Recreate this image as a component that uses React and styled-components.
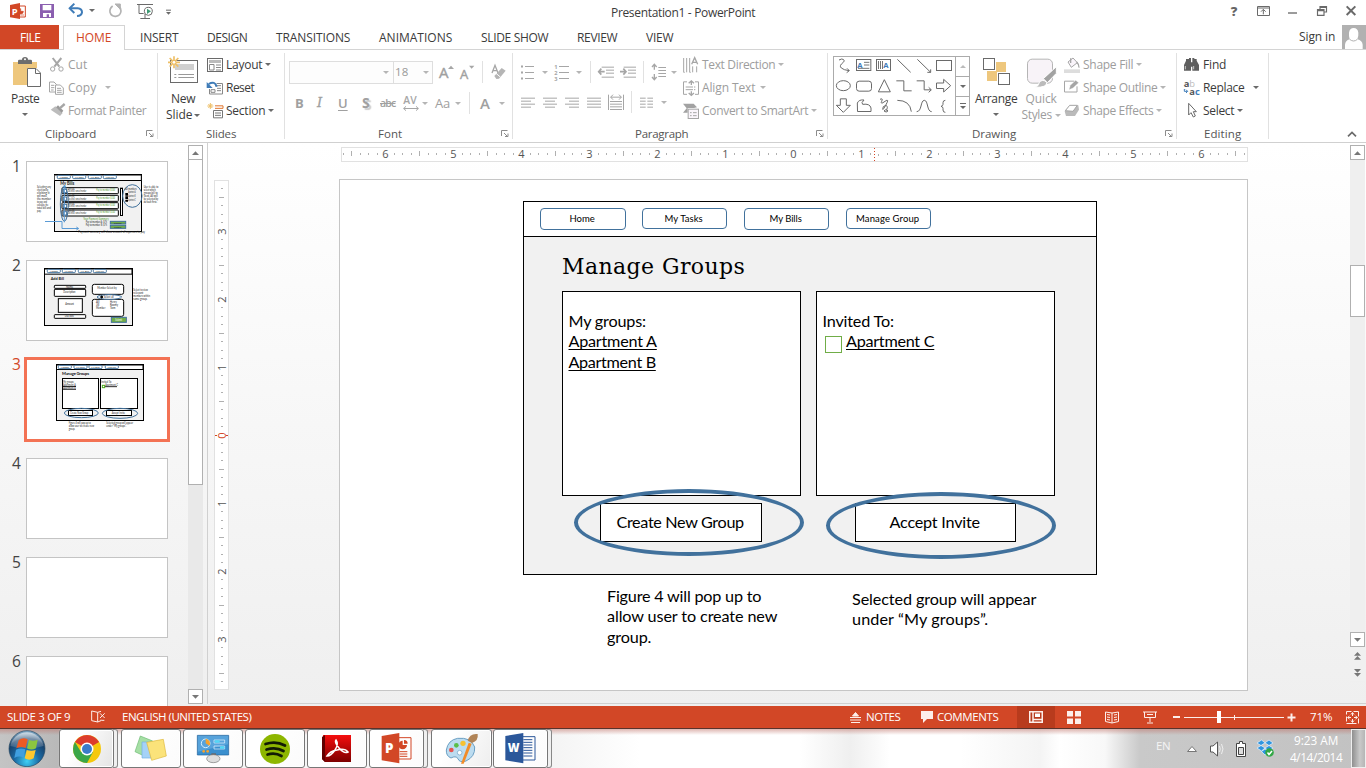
import React, { useLayoutEffect, useRef, useState } from "react";
import styled, { createGlobalStyle, css } from "styled-components";

const Global = createGlobalStyle`
  * { box-sizing: border-box; }
  body { margin: 0; width: 1366px; height: 768px; overflow: hidden; background: #fff; }
  svg { display: block; flex: none; }
`;

const ui = `"Open Sans", "Noto Sans", sans-serif`;
const slideFont = `Lato, "Open Sans", sans-serif`;
const G = "#6a6a6a";
const D = "#a6a6a6";
const BLUE = "#41719c";

/* ---------- text that is tracked to a given width ---------- */
const Tracked = styled.span`
  display: block;
  flex: none;
  width: ${(p) => p.$w}px;
  margin-left: ${(p) => p.$ml || 0}px;
  white-space: pre;
  font-family: ${(p) => p.$font || ui};
  font-size: ${(p) => p.$size || 12}px;
  color: ${(p) => p.$color || "#3b3b3b"};
  line-height: ${(p) => p.$lh || 16}px;
  ${(p) =>
    p.$underline &&
    css`
      text-decoration: underline;
      text-decoration-thickness: 1px;
      text-underline-offset: 2px;
      text-decoration-skip-ink: none;
    `}
`;

function Label({ w, size, color, font, lh, ml, underline, children }) {
  const ref = useRef(null);
  const [spacing, setSpacing] = useState(0);
  useLayoutEffect(() => {
    const natural = ref.current.getBoundingClientRect().width;
    const n = ref.current.textContent.length;
    setSpacing((w + 0.3 - natural) / n);
  }, []);
  return (
    <Tracked $w={w} $size={size} $color={color} $font={font} $lh={lh} $ml={ml} $underline={underline}>
      <span ref={ref} style={{ letterSpacing: spacing }}>{children}</span>
    </Tracked>
  );
}

/* Icon drawn on a grid of three units to the pixel */
const IconSvg = styled.svg`
  margin-left: ${(p) => p.$ml || 0}px;
  margin-top: ${(p) => p.$mt || 0}px;
  overflow: visible;
`;
const Icon = ({ x, y, w, h, ml, mt, children }) => (
  <IconSvg $ml={ml} $mt={mt} width={w} height={h} viewBox={`${x} ${y} ${w * 3} ${h * 3}`} fill="none" stroke={G} strokeWidth="3">
    {children}
  </IconSvg>
);

const Arrow = styled.i`
  flex: none;
  width: 0;
  height: 0;
  border: 3px solid transparent;
  border-top-color: ${(p) => (p.$dim ? "#b5b5b5" : "#6a6a6a")};
  border-bottom: 0;
  margin-left: ${(p) => p.$ml || 0}px;
  margin-top: ${(p) => p.$mt || 0}px;
`;

/* ---------- window frame ---------- */
const Window = styled.div`
  width: 1366px;
  height: 768px;
  display: flex;
  flex-direction: column;
  overflow: hidden;
  background: #fff;
  font-family: ${ui};
`;
const TitleBar = styled.div`
  height: 25px;
  flex: none;
  display: flex;
  align-items: flex-start;
  padding-left: 9px;
`;
const TitleSlot = styled.div`
  margin-left: 440px;
  padding-top: 5px;
`;
const TabBar = styled.div`
  height: 25px;
  flex: none;
  display: flex;
  border-bottom: 1px solid #d4d4d4;
`;
const Tab = styled.div`
  height: ${(p) => (p.$active ? 25 : 24)}px;
  width: ${(p) => p.$w}px;
  padding-left: ${(p) => p.$pad}px;
  padding-top: 5px;
  flex: none;
  ${(p) => p.$file && css`background: #d24726;`}
  ${(p) =>
    p.$active &&
    css`
      margin-left: 4px;
      border: 1px solid #d4d4d4;
      border-bottom: 0;
      background: #fff;
      padding-top: 4px;
    `}
`;
const SignIn = styled.div`
  margin-left: auto;
  display: flex;
  gap: 7px;
  padding-top: 4px;
`;
const Avatar = styled.div`
  width: 24px;
  height: 24px;
  margin-top: -4px;
  background: #b1b1b1;
`;

/* ---------- ribbon ---------- */
const Ribbon = styled.div`
  height: 93px;
  flex: none;
  display: flex;
  border-bottom: 1px solid #d0d0d0;
`;
const GroupBox = styled.div`
  width: ${(p) => p.$w}px;
  height: 92px;
  flex: none;
  display: flex;
  flex-direction: column;
  border-right: 1px solid #e1e1e1;
  border-image: linear-gradient(#fff 4px, #e1e1e1 4px, #e1e1e1 88px, #fff 88px) 1;
`;
const GroupBody = styled.div`
  height: 76px;
  display: flex;
  padding-top: 4px;
`;
const Caption = styled.div`
  height: 16px;
  display: flex;
  align-items: center;
  padding-left: ${(p) => p.$pad}px;
`;
const Launch = styled.div`
  margin-left: auto;
  padding-right: 3px;
`;
const Big = styled.div`
  width: ${(p) => p.$w}px;
  margin-left: ${(p) => p.$ml || 0}px;
  flex: none;
  display: flex;
  flex-direction: column;
  align-items: center;
`;
const BigIcon = styled.div`
  height: 37px;
  display: flex;
  align-items: flex-start;
`;
const Line = styled.div`
  height: 16px;
  display: flex;
  align-items: center;
  justify-content: center;
`;
const Rows = styled.div`
  display: flex;
  flex-direction: column;
  margin-top: -1px;
  margin-left: ${(p) => p.$ml || 0}px;
`;
const Row = styled.div`
  height: 23px;
  display: flex;
  align-items: center;
`;
const IconSlot = styled.div`
  width: ${(p) => p.$w || 18}px;
  flex: none;
`;
const Tools = styled.div`
  height: 22px;
  display: flex;
  align-items: center;
  margin-top: ${(p) => p.$mt}px;
  padding-left: ${(p) => p.$pl || 0}px;
`;
const Combo = styled.div`
  width: ${(p) => p.$w}px;
  margin-left: ${(p) => p.$ml || 0}px;
  height: 23px;
  flex: none;
  border: 1px solid #dedede;
  background: #fdfdfd;
  display: flex;
  align-items: center;
  padding-left: 1px;
`;
const Sep = styled.div`
  width: 1px;
  height: 22px;
  flex: none;
  background: #e1e1e1;
  margin-left: ${(p) => p.$ml}px;
`;
const Glyph = styled.span`
  width: ${(p) => p.$w}px;
  margin-left: ${(p) => p.$ml || 0}px;
  flex: none;
  white-space: nowrap;
  font-size: ${(p) => p.$size || 13}px;
  line-height: 20px;
  color: #a0a0a0;
  ${(p) => p.$css}
`;

const Launcher = () => (
  <Icon x={438} y={393} w={8} h={8}>
    <path d="M439.5 411V394.500H457.500M447 402l10 10M459 403.500V412.500H450" stroke="#8c8c8c" />
  </Icon>
);

function Group({ w, caption, cw, pad, launcher, children }) {
  return (
    <GroupBox $w={w}>
      <GroupBody>{children}</GroupBody>
      <Caption $pad={pad}>
        <Label w={cw} size={11.5} color="#555">{caption}</Label>
        {launcher && <Launch><Launcher /></Launch>}
      </Caption>
    </GroupBox>
  );
}

function Small({ icon, slot, label, w, dim, caret, gap = 3 }) {
  return (
    <Row>
      <IconSlot $w={slot}>{icon}</IconSlot>
      <Label w={w} color={dim ? "#9d9d9d" : "#3b3b3b"}>{label}</Label>
      {caret && <Arrow $dim={dim} $ml={gap} />}
    </Row>
  );
}

function ClipboardGroup() {
  return (
    <Group w={158} caption="Clipboard" cw={51} pad={45} launcher>
      <Big $w={50}>
        <BigIcon>
          <Icon x={36} y={174} w={31} h={32} ml={4} mt={3}>
            <path d="M39 189H111V207H81V258H39Z" fill="#eec77d" stroke="none" />
            <path d="M54 195v-9q0-4 4-4h8q0-8 9-8t9 8h8q4 0 4 4v9Z" fill="#6d6d6d" stroke="none" />
            <circle cx="75" cy="181" r="3" fill="#fff" stroke="none" />
            <path d="M82.500 208.500H108L121.500 222V262.500H82.500ZM106.500 208.500V223.500H121.500" fill="#fff" />
          </Icon>
        </BigIcon>
        <Line><Label w={28}>Paste</Label></Line>
        <Line><Arrow $mt={-2} /></Line>
      </Big>
      <Rows>
        <Small dim label="Cut" w={19} icon={
          <Icon x={150} y={168} w={15} h={16}>
            <path d="M158 171L178 197M184 171L163 197" stroke={D} strokeWidth="6" />
            <circle cx="158" cy="204" r="6.500" stroke={D} /><circle cx="183" cy="204" r="6.500" stroke={D} />
          </Icon>} />
        <Small dim label="Copy" w={28} caret gap={9} icon={
          <Icon x={147} y={240} w={16} h={14} ml={-1}>
            <path d="M148.500 243H162l8 8V273H148.500ZM153 253h10M153 260h10M153 267h8" stroke={D} />
            <path d="M166.500 252H181l9 9V280H166.500ZM171 262h12M171 268h14M171 274h14" fill="#fff" stroke={D} />
          </Icon>} />
        <Small dim label="Format Painter" w={78} icon={
          <Icon x={148} y={308} w={16} h={15}>
            <path d="M150 328L164 318L186 338L178 347Z" fill="#bcbcbc" stroke="none" />
            <path d="M166 321l6-6 16 16-5 6Z" fill="#999" stroke="none" />
            <path d="M177 324L192 311" stroke={D} strokeWidth="7" />
          </Icon>} />
      </Rows>
    </Group>
  );
}

function SlidesGroup() {
  return (
    <Group w={127} caption="Slides" cw={30} pad={48}>
      <Big $w={48} $ml={1}>
        <BigIcon>
          <Icon x={501} y={168} w={31} h={28} ml={0} mt={2}>
            <rect x="508.500" y="181.500" width="81" height="66" fill="#fff" />
            <path d="M522 192H579V210H522Z" fill="#d0d0d0" stroke="none" />
            <path d="M520 223.500H526M532 223.500H579M520 232.500H526M532 232.500H579" stroke="#999" />
            <path d="M519 169V205M501 187H537M506 174l26 26M532 174l-26 26" stroke="#eebf66" strokeWidth="5" />
            <circle cx="519" cy="187" r="4" fill="#fff" stroke="none" />
          </Icon>
        </BigIcon>
        <Line><Label w={24}>New</Label></Line>
        <Line><Label w={26}>Slide</Label><Arrow $ml={2} /></Line>
      </Big>
      <Rows>
        <Small slot={19} label="Layout" w={36} caret icon={
          <Icon x={621} y={171} w={16} h={14}>
            <rect x="622.500" y="172.500" width="45" height="39" />
            <path d="M627 177H663V186H627Z" fill="#bbb" stroke="none" /><path d="M628.500 190.500H642V207H628.500ZM648 192H663M648 199.500H663M648 207H663" stroke="#888" />
          </Icon>} />
        <Small slot={19} label="Reset" w={28} icon={
          <Icon x={621} y={240} w={16} h={14}>
            <path d="M650 247.500H667.500V279H628.500V264M645 254H663M633 266H645V274H633ZM651 262H663M651 269H663" stroke="#888" />
            <path d="M626 249Q645 238 650 257" stroke="#3f7cb8" strokeWidth="6" /><path d="M620 243V261H638Z" fill="#3f7cb8" stroke="none" />
          </Icon>} />
        <Small slot={19} label="Section" w={39} caret icon={
          <Icon x={621} y={308} w={16} h={16}>
            <path d="M631 308v18M622 317h18M625 311l12 12M637 311l-12 12" stroke="#eebf66" />
            <path d="M645 316.500H669V324H645" stroke="#e0752e" />
            <path d="M640.500 330.500H667.500V352.500H640.500ZM645 338h18M645 345h18" stroke="#777" />
          </Icon>} />
      </Rows>
    </Group>
  );
}

function FontGroup() {
  return (
    <Group w={228} caption="Font" cw={24} pad={93} launcher>
      <Rows>
        <Tools $mt={8} $pl={4}>
          <Combo $w={105}><Arrow $dim $ml={92} /></Combo>
          <Combo $w={40} $ml={-1}><Label w={13} color="#999" size={11.500}>18</Label><Arrow $dim $ml={15} /></Combo>
          <Glyph $w={13} $ml={6} $size={15} $css="-webkit-text-stroke:.4px #a0a0a0">A</Glyph>
          <Icon x={0} y={0} w={6} h={4} ml={-4} mt={-11}><path d="M0 12L9 2L18 12Z" fill={D} stroke="none" /></Icon>
          <Glyph $w={10} $ml={6} $size={13} $css="-webkit-text-stroke:.4px #a0a0a0;padding-top:3px">A</Glyph>
          <Icon x={0} y={0} w={5} h={4} ml={-1} mt={-11}><path d="M0 2L8 11L16 2Z" fill={D} stroke="none" /></Icon>
          <Sep $ml={8} />
          <Icon x={630} y={48} w={16} h={16} ml={8}>
            <path d="M633 75L642 52L651 75M637 68H648" stroke={D} strokeWidth="4" />
            <path d="M640 84L662 60L674 68L654 92L646 93Z" fill="#b5b5b5" stroke="none" /><path d="M645 76l13 11" stroke="#fff" />
          </Icon>
        </Tools>
        <Tools $mt={9} $pl={10}>
          <Glyph $w={8} $css="font-weight:700">B</Glyph>
          <Glyph $w={8} $ml={14} $css="font-family:'DejaVu Serif',serif;font-style:italic;-webkit-text-stroke:.3px #a0a0a0">I</Glyph>
          <Glyph $w={10} $ml={13} $css="font-weight:600;text-decoration:underline;text-underline-offset:2px">U</Glyph>
          <Glyph $w={10} $ml={14} $size={14} $css="font-weight:700;text-shadow:2px 2px 1px #ccc">S</Glyph>
          <Glyph $w={16} $ml={8} $size={10.500} $css="text-decoration:line-through;letter-spacing:-.8px;font-weight:600">abc</Glyph>
          <Icon x={366} y={142} w={16} h={15} ml={7}>
            <text x="367" y="166" fontSize="31" fontFamily="Open Sans" fontWeight="600" fill={D} stroke="none">AV</text>
            <path d="M368 179.500H412M375 173l-7 6.500 7 6.500M405 173l7 6.500-7 6.500" stroke={D} />
          </Icon>
          <Arrow $dim $ml={3} />
          <Glyph $w={17} $ml={7} $size={13} $css="letter-spacing:-.3px">Aa</Glyph>
          <Arrow $dim $ml={3} />
          <Sep $ml={8} />
          <Glyph $w={10} $ml={10} $size={15} $css="font-weight:600">A</Glyph>
          <Arrow $dim $ml={9} />
        </Tools>
      </Rows>
    </Group>
  );
}

function ParagraphGroup() {
  return (
    <Group w={315} caption="Paragraph" cw={53} pad={122} launcher>
      <Rows>
        <Tools $mt={8} $pl={8}>
          <Icon x={48} y={45} w={14} h={17}>
            <path d="M60 52.500H87M60 70.500H87M60 88.500H87" stroke={D} /><path d="M48 52.500h6M48 70.500h6M48 88.500h6" stroke={D} strokeWidth="6" />
          </Icon>
          <Arrow $dim $ml={7} />
          <Icon x={147} y={45} w={15} h={17} ml={6}>
            <path d="M162 52.500H192M162 70.500H192M162 88.500H192" stroke={D} />
            <g fontFamily="Open Sans" fontSize="17" fontWeight="700" fill={D} stroke="none"><text x="148" y="59">1</text><text x="148" y="77">2</text><text x="148" y="95">3</text></g>
          </Icon>
          <Arrow $dim $ml={7} />
          <Sep $ml={8} />
          <Icon x={276} y={55} w={16} h={12} ml={7}>
            <path d="M287 58.500H324M300 67.500H324M300 76.500H324M287 88.500H324" stroke={D} /><path d="M278 72H296M286 63l-8 9 8 9" stroke={D} strokeWidth="5" />
          </Icon>
          <Icon x={342} y={55} w={16} h={12} ml={6}>
            <path d="M353 58.500H390M366 67.500H390M366 76.500H390M353 88.500H390" stroke={D} /><path d="M342 72H360M352 63l8 9-8 9" stroke={D} strokeWidth="5" />
          </Icon>
          <Sep $ml={7} />
          <Icon x={438} y={48} w={15} h={16} ml={8}>
            <path d="M457 58.500H480M457 67.500H480M457 76.500H480M457 85.500H480" stroke={D} /><path d="M445 49V65M438 57l7-8 7 8M445 78V95M438 87l7 8 7-8" stroke={D} strokeWidth="4" />
          </Icon>
          <Arrow $dim $ml={4} />
        </Tools>
        <Tools $mt={8} $pl={8}>
          {[["M48 151.500H90M48 160.500H78M48 169.500H90M48 178.500H78", 0, 48], ["M114 151.500H156M120 160.500H150M114 169.500H156M120 178.500H150", 8, 114], ["M180 151.500H222M192 160.500H222M180 169.500H222M192 178.500H222", 8, 180], ["M246 151.500H288M246 160.500H288M246 169.500H288M246 178.500H288", 8, 246]].map(([d, ml, x]) => (
            <Icon key={x} x={x} y={148} w={14} h={11} ml={ml}><path d={d} stroke={D} /></Icon>
          ))}
          <Icon x={309} y={139} w={16} h={16} ml={7}>
            <path d="M310.500 141V187M355.500 141V187M315 161.500H351M315 169.500H351M315 177.500H351M315 185.500H351M317 148.500H349M324 141l-7 7.500 7 7.500M342 141l7 7.500-7 7.500" stroke={D} />
          </Icon>
          <Sep $ml={7} />
          <Icon x={405} y={148} w={13} h={11} ml={8}><path d="M405 151.500H422M405 160.500H422M405 169.500H422M405 178.500H422M427 151.500H444M427 160.500H444M427 169.500H444M427 178.500H444" stroke={D} /></Icon>
          <Arrow $dim $ml={8} />
        </Tools>
      </Rows>
      <Rows $ml={6}>
        <Small slot={19} dim label="Text Direction" w={73} caret icon={
          <Icon x={534} y={24} w={16} h={16}>
            <path d="M536 27V70M545 27V70M554 27V70M563 52V70M575 52V70M536 70h3M554 70h3" stroke={D} /><path d="M560 46L569 26L578 46M564 40H575" stroke={D} strokeWidth="4" />
          </Icon>} />
        <Small slot={19} dim label="Align Text" w={53} caret gap={5} icon={
          <Icon x={534} y={92} w={16} h={16}>
            <path d="M546 97.500H535.500V135H546M570 97.500H580.500V135H570" stroke={D} /><path d="M542 113H574M542 121H574" stroke={D} strokeDasharray="22 3 4 3" />
            <path d="M559 95V107M559 126V138M551 102l8-7 8 7M551 131l8 7 8-7" stroke={D} strokeWidth="4" />
          </Icon>} />
        <Small slot={19} dim label="Convert to SmartArt" w={106} caret icon={
          <Icon x={534} y={161} w={16} h={16}>
            <path d="M534 163H566L576 174L567 176H548V190H534L545 177Z" fill="#a2a2a2" stroke="none" /><rect x="549.500" y="179.500" width="31" height="28" fill="#faf5fb" stroke={D} /><path d="M555 190h5M564 190h11M555 199h5M564 199h11" stroke={D} />
          </Icon>} />
      </Rows>
    </Group>
  );
}

const Gallery = styled.div`
  width: 137px;
  height: 60px;
  margin: 2px 0 0 5px;
  flex: none;
  display: flex;
  border: 1px solid #ababab;
`;
const ShapeGrid = styled.div`
  width: 121px;
  height: 58px;
  padding-left: 1px;
  overflow: hidden;
  display: grid;
  grid-template-columns: repeat(6, 20px);
  grid-auto-rows: 20px;
`;
const GalleryBtns = styled.div`
  flex: 1;
  display: grid;
  grid-template-rows: 20px 20px 1fr;
  border-left: 1px solid #ababab;
`;
const GalleryBtn = styled.div`
  display: flex;
  flex-direction: column;
  gap: 2px;
  align-items: center;
  justify-content: center;
  border-bottom: ${(p) => (p.$last ? 0 : "1px solid #ababab")};
`;
const Bar = styled.i`
  width: 6px;
  height: 1px;
  background: #6a6a6a;
`;
const TA = (x, y) => <text x={x} y={y} fontSize="23" fontWeight="700" fontFamily="Open Sans" fill="#3f7cb8" stroke="none">A</text>;
const shapes = [
  <path d="M42 36L50 33Q62 35 55 43Q41 53 49 60Q56 66 72 68M66 61l7 7-8 6" />,
  <g><rect x="94.500" y="34.500" width="43" height="33" />{TA(97, 59)}<path d="M117 43H133M117 51H133M99 61H133" stroke="#777" /></g>,
  <g><rect x="154.500" y="34.500" width="42" height="33" />{TA(175, 59)}<path d="M160.500 39V63M166.500 39V63M172.500 39V63" stroke="#777" /></g>,
  <path d="M217 34L257 73" />,
  <path d="M277 34L317 73M317 64v9h-10" />,
  <rect x="334.500" y="37.500" width="45" height="30" />,
  <ellipse cx="55" cy="113" rx="21" ry="15" />,
  <rect x="94.500" y="99.500" width="45" height="30" rx="8" />,
  <path d="M178 95L160 131.500H196Z" />,
  <path d="M214 98.500H236.500V128.500H260" />,
  <path d="M275 98.500H297.500V125.500H318M311 118l8 7.500-8 7.500" />,
  <path d="M334.500 105H356V94L377 113L356 132V121.500H334.500Z" />,
  <path d="M46 152.500H64V172H76L55 193L34 172H46Z" />,
  <path d="M97 165q5-11 20-9q-10 9-4 13q22-3 25 11v10.500H97.500Z" />,
  <path d="M165 154q10-5 5 6t10 0t2 12t-7 4q12-8 12 3q-5 8 2 10q-5 6-12 0q3-6 10-2" />,
  <path d="M217 157Q255 157 259 191" />,
  <path d="M275 191C291 191 286 157 298 157S305 191 320 191" />,
  <path d="M361 157q-7 0-7 7v5q0 5-6 6q6 1 6 6v5q0 7 7 7" />,
];

function DrawingGroup() {
  return (
    <Group w={349} caption="Drawing" cw={44} pad={144} launcher>
      <Gallery>
        <ShapeGrid>
          {shapes.map((s, i) => (
            <Icon key={i} x={30 + 60 * (i % 6)} y={27 + 60 * Math.floor(i / 6)} w={20} h={20}>{s}</Icon>
          ))}
        </ShapeGrid>
        <GalleryBtns>
          <GalleryBtn><Icon x={0} y={0} w={6} h={3}><path d="M0 9L9 0L18 9Z" fill="#bbb" stroke="none" /></Icon></GalleryBtn>
          <GalleryBtn><Arrow /></GalleryBtn>
          <GalleryBtn $last><Bar /><Arrow /></GalleryBtn>
        </GalleryBtns>
      </Gallery>
      <Big $w={50} $ml={1}>
        <BigIcon>
          <Icon x={471} y={27} w={27} h={28} mt={3}>
            <path d="M510 42H540V72H510ZM483 69H513V99H483Z" fill="#eec77d" stroke="none" /><rect x="472.500" y="31.500" width="33" height="33" fill="#fff" /><rect x="517.500" y="76.500" width="33" height="33" fill="#fff" />
          </Icon>
        </BigIcon>
        <Line><Label w={42}>Arrange</Label></Line>
        <Line><Arrow $mt={-2} /></Line>
      </Big>
      <Big $w={44} $ml={-2}>
        <BigIcon>
          <Icon x={609} y={30} w={30} h={30} mt={4} ml={2}>
            <rect x="610.500" y="33.500" width="75" height="72" rx="14" fill="#f8f3f8" stroke="#b5b5b5" /><path d="M697 56V76L670 104L658 92Z" fill="#a2a2a2" stroke="#fff" /><path d="M631 118Q645 115 645 104Q656 91 668 103Q671 119 631 118Z" fill="#bbb" stroke="#fff" />
          </Icon>
        </BigIcon>
        <Line><Label w={31} color="#9d9d9d">Quick</Label></Line>
        <Line><Label w={30} color="#9d9d9d">Styles</Label><Arrow $dim $ml={3} /></Line>
      </Big>
      <Rows $ml={1}>
        <Small slot={19} dim label="Shape Fill" w={50} caret icon={
          <Icon x={723} y={24} w={16} h={16}><path d="M735 39L750 27L763 41L745 55Z" fill="#faf5fb" stroke={D} /><path d="M743 28v14M761 39q8 8 7 17" stroke={D} strokeWidth="4" /><path d="M723 61H771V72H723Z" fill="#ddd" stroke="none" /></Icon>} />
        <Small slot={19} dim label="Shape Outline" w={74} caret icon={
          <Icon x={723} y={93} w={16} h={15}><path d="M754 96.500H724.500V129H762V112" stroke={D} /><path d="M738 122L742 109L758 94L767 101L750 117Z" fill="#a5a5a5" stroke="#fff" strokeWidth="1" /></Icon>} />
        <Small slot={19} dim label="Shape Effects" w={70} caret icon={
          <Icon x={723} y={168} w={16} h={14}><path d="M725 190L740 172H766L768 185L756 204H729Z" fill="#bababa" stroke="none" /><path d="M727 188L740 172H763L750 190Z" fill="#fff" stroke={D} /></Icon>} />
      </Rows>
    </Group>
  );
}

function EditingGroup() {
  return (
    <Group w={92} caption="Editing" cw={37} pad={27}>
      <Rows $ml={7}>
        <Small slot={19} label="Find" w={23} icon={
          <Icon x={282} y={171} w={16} h={14}><path d="M282 192L288 179V174H297V171H303V192V209H282ZM307 171H313V174H320V179L327 192V209H307ZM301 184H309V197H301Z" fill="#5f5f5f" stroke="none" /><path d="M286 195v10M311 195v10" stroke="#fff" strokeWidth="2" /></Icon>} />
        <Small slot={19} label="Replace" w={41} caret gap={9} icon={
          <Icon x={282} y={238} w={16} h={16}>
            <text fontFamily="Open Sans" fontSize="28" fontWeight="700" stroke="none"><tspan x="281" y="259" fill="#555">a</tspan><tspan fill="#bbb" fontWeight="400">b</tspan><tspan x="298" y="282" fill="#555">a</tspan><tspan fill="#3f7cb8">c</tspan></text>
            <path d="M283 265V272H292M288 267l5 5-5 5" stroke="#3f7cb8" />
          </Icon>} />
        <Small slot={19} label="Select" w={31} caret icon={
          <Icon x={288} y={308} w={14} h={15} ml={2}><path d="M296 309V344L303 337L310 350L316 347L310 334H319Z" fill="#fff" /></Icon>} />
      </Rows>
    </Group>
  );
}

const Collapse = styled.div`
  margin-left: auto;
  align-self: flex-end;
  padding: 0 9px 5px 0;
`;

/* ---------- work area ---------- */
const Work = styled.div`
  height: 563px;
  flex: none;
  display: flex;
  background: linear-gradient(#fff, #efefef);
`;
const ThumbPane = styled.div`
  width: 188px;
  flex: none;
  padding: 16px 0 0 12px;
  overflow: hidden;
`;
const ThumbRow = styled.div`
  height: 99px;
  display: flex;
  align-items: flex-start;
`;
const Num = styled.span`
  width: 12px;
  margin-top: -3px;
  flex: none;
  font-size: 15.5px;
  letter-spacing: -0.5px;
  line-height: 20px;
  color: ${(p) => (p.$on ? "#d24726" : "#444")};
`;
const Thumb = styled.div`
  box-sizing: content-box;
  width: 142px;
  height: 81px;
  margin: ${(p) => (p.$on ? -2 : 2)}px 0 0 ${(p) => (p.$on ? 0 : 2)}px;
  ${(p) => p.$on && css`margin-top: 0;`}
  outline: ${(p) => (p.$on ? "1px solid #f37254" : 0)};
  outline-offset: -3px;
  border: ${(p) => (p.$on ? "2px solid #f37254" : 0)};
  box-shadow: ${(p) => (p.$on ? "none" : "inset 0 0 0 1px #c4c4c4")};
  background: #fff;
`;
const ScrollBar = styled.div`
  width: 15px;
  height: ${(p) => p.$h}px;
  margin-top: 2px;
  flex: none;
  display: flex;
  flex-direction: column;
  background: ${(p) => p.$bg || "#e9e9e9"};
`;
const ScrollCell = styled.div`
  height: ${(p) => p.$h}px;
  margin-top: ${(p) => p.$mt || 0}px;
  flex: none;
  display: flex;
  align-items: center;
  justify-content: center;
  background: #fff;
  border: 1px solid #b0b0b0;
`;
const JumpCell = styled.div`
  height: 17px;
  display: flex;
  align-items: center;
  justify-content: center;
  background: #f0f0f0;
`;
const Splitter = styled.div`
  width: 1px;
  height: 561px;
  margin-left: 4px;
  background: #d0d0d0;
`;
const Editor = styled.div`
  flex: 1;
  height: 561px;
  display: flex;
  border-bottom: 1px solid #d0d0d0;
  margin-left: 2px;
`;
const VRuler = styled.div`
  width: 15px;
  height: 510px;
  margin: 37px 0 0 4px;
  flex: none;
  background: #fff;
  border: 1px solid #e1e1e1;
  overflow: hidden;
  display: flex;
  flex-direction: column;
  justify-content: center;
`;
const HRuler = styled.div`
  width: 907px;
  height: 15px;
  margin: 4px 0 0 112px;
  background: #fff;
  border: 1px solid #e1e1e1;
  padding: 0 2px 2px 0;
  overflow: hidden;
  display: flex;
  justify-content: center;
`;
const Tick = styled.div`
  ${(p) => (p.$v ? "height" : "width")}: 8.5px;
  flex: none;
  display: flex;
  align-items: center;
  justify-content: center;
  font-size: 11px;
  line-height: 13px;
  color: #555;
  ${(p) =>
    p.$mark &&
    (p.$v
      ? css`
          color: #d24726;
          background: linear-gradient(90deg, #d24726 2px, transparent 2px, transparent 11px, #d24726 11px) 0 50% / 100% 1px no-repeat;
        `
      : css`
          height: 14px;
          background: repeating-linear-gradient(#d24726 0 1px, transparent 1px 3px) 0 0 / 1px 100% no-repeat;
        `)}
  i {
    flex: none;
    background: #b0b0b0;
    ${(p) => (p.$v ? "height" : "width")}: 1px;
    ${(p) => (p.$v ? "width" : "height")}: ${(p) => (p.$long ? 5 : 2)}px;
  }
  span {
    ${(p) => p.$v && "transform: rotate(-90deg);"}
  }
`;
const ticks = (n) => Array.from({ length: n * 2 + 1 }, (_, i) => i - n);
const Ruler = ({ n, v }) =>
  ticks(n).map((k) => (
    <Tick key={k} $v={v} $long={Math.abs(k) % 8 === 4} $mark={v ? k === 0 : k === 10}>
      {k % 8 === 0 ? <span>{Math.abs(k / 8)}</span> : <i />}
    </Tick>
  ));
const Center = styled.div`
  width: 1121px;
  flex: none;
`;
const Slide = styled.div`
  position: relative;
  width: 909px;
  height: 512px;
  margin: 17px 0 0 110px;
  background: #fff;
  border: 1px solid #c6c6c6;
`;
/* Objects placed freely on the slide, measured from its outer corner */
const Obj = styled.div`
  position: absolute;
  left: ${(p) => p.$x - 1}px;
  top: ${(p) => p.$y - 1}px;
`;
const Frame = styled(Obj)`
  width: 574px;
  height: 374px;
  border: 1px solid #000;
  background: #f1f1f1;
`;
const FrameHead = styled.div`
  height: 35px;
  background: #fff;
  border-bottom: 1px solid #000;
`;
const Panel = styled(Obj)`
  width: ${(p) => p.$w}px;
  height: ${(p) => p.$h}px;
  padding: 0 2px 2px 0;
  background: #fff;
  border: 1px solid #000;
  display: flex;
  align-items: center;
  justify-content: center;
`;
const NavButton = styled(Panel)`
  padding-bottom: 0;
  border-color: ${BLUE};
  border-radius: 4px;
`;
const CheckBox = styled(Obj)`
  width: 17px;
  height: 17px;
  border: 1px solid #70ad47;
`;
const Ring = styled(Obj)`
  width: 230px;
  height: 67px;
  border: 4px solid ${BLUE};
  border-radius: 50%;
`;
const ST = (p) => <Label font={slideFont} size={16.2} color="#000" lh={20} {...p} />;

function SlideCanvas() {
  return (
    <Slide>
      <Frame $x={184} $y={22}><FrameHead /></Frame>
      {[["Home", 201, 86, 22, 25], ["My Tasks", 303, 85, 21, 38], ["My Bills", 405, 85, 22, 32], ["Manage Group", 507, 85, 21, 63]].map(([t, x, w, h, tw]) => (
        <NavButton key={t} $x={x} $y={29} $w={w} $h={h}><ST w={tw} size={9.5}>{t}</ST></NavButton>
      ))}
      <Obj $x={223} $y={74}><Label w={183} size={22} lh={28} color="#000" font={`"DejaVu Serif", serif`}>Manage Groups</Label></Obj>
      <Panel $x={223} $y={112} $w={239} $h={205} />
      <Panel $x={477} $y={112} $w={239} $h={205} />
      <Obj $x={229.5} $y={132}><ST w={77}>My groups:</ST></Obj>
      <Obj $x={229.5} $y={152}><ST w={88} underline>Apartment A</ST></Obj>
      <Obj $x={229.5} $y={173}><ST w={87} underline>Apartment B</ST></Obj>
      <Obj $x={483.5} $y={132}><ST w={71}>Invited To:</ST></Obj>
      <CheckBox $x={486} $y={157} />
      <Obj $x={507} $y={152}><ST w={88} underline>Apartment C</ST></Obj>
      <Panel $x={261} $y={324} $w={162} $h={39}><ST w={127}>Create New Group</ST></Panel>
      <Panel $x={516} $y={324} $w={161} $h={39}><ST w={90}>Accept Invite</ST></Panel>
      <Ring $x={235} $y={310} />
      <Ring $x={487} $y={313} />
      <Obj $x={268} $y={407}><ST w={154}>Figure 4 will pop up to</ST></Obj>
      <Obj $x={268} $y={427}><ST w={170}>allow user to create new</ST></Obj>
      <Obj $x={268} $y={448}><ST w={44}>group.</ST></Obj>
      <Obj $x={513} $y={410}><ST w={184}>Selected group will appear</ST></Obj>
      <Obj $x={513} $y={430}><ST w={136}>under “My groups”.</ST></Obj>
    </Slide>
  );
}

/* ---------- miniature slides ---------- */
const Mini = ({ y, children }) => (
  <svg width="142" height="81" viewBox={`78 ${y} 426 243`} fill="none" stroke="#000" strokeWidth="3" fontFamily="Lato, sans-serif">{children}</svg>
);
const T = ({ x, y, s = 9, f = "#222", w, children }) => <text x={x} y={y} fontSize={s} fill={f} stroke="none" textLength={w} lengthAdjust="spacingAndGlyphs">{children}</text>;
const MiniNav = ({ xs, y }) => ["Home", "My Tasks", "My Bills", "Manage Group"].map((t, i) => (
  <g key={t}><rect x={xs[i]} y={y} width="39" height="10" rx="3" stroke={BLUE} fill="#fff" /><T x={xs[i] + 7} y={y + 8} s={6} w={25}>{t}</T></g>
));
const Mini1 = () => (
  <Mini y={48}>
    <rect x="163.500" y="88.500" width="261" height="171" fill="#f1f1f1" /><path d="M164 90H424V106.500H164" fill="#fff" />
    <MiniNav xs={[172, 218, 265, 310]} y={91} />
    <text x="181" y="121" fontSize="14" fontWeight="700" fill="#111" stroke="none" textLength="42" lengthAdjust="spacingAndGlyphs">My Bills</text>
    {[128, 151, 173, 195].map((y) => (
      <g key={y}><rect x="186" y={y} width="169" height="18" rx="2" fill="#fff" /><rect x="190" y={y + 5} width="10" height="10" stroke={BLUE} /><T x={203} y={y + 6} w={20}>Utility Bill</T><T x={203} y={y + 13} w={56}>Date of bill, name of member</T><T x={289} y={y + 10} f="#4c9a2a" w={56}>Pay to member $100</T></g>
    ))}
    <rect x="361.500" y="129.500" width="6" height="82" fill="#fff" />
    <ellipse cx="397" cy="153" rx="29" ry="34" stroke={BLUE} />
    {["All members", "Apartment A", "Apartment B", "Apartment C"].map((t, i) => <T key={t} x={i ? 385 : 376} y={134 + i * 11} w={i ? 22 : 34}>{t}</T>)}
    <path d="M376 144h8v8h-8ZM376 154h8v8h-8ZM376 164h8v6h-8Z" fill="#000" stroke="none" />
    <ellipse cx="193" cy="177" rx="12" ry="52" stroke={BLUE} />
    <path d="M135 229.500H186V250.500H235M229 246l7 4.500-7 4.500M193 232V122M188 127l5-6 5 6" stroke="#5b9bd5" />
    <T x={250} y={225} f="#4c9a2a" w={76}>Your Payment Summary</T><T x={257} y={234} w={64}>Pay to member A: $75</T><T x={257} y={243} w={64}>Pay to member B: $75</T>
    <rect x="331" y="229" width="46" height="8" fill="#70ad47" stroke={BLUE} /><rect x="331" y="241" width="46" height="9" fill="#70ad47" stroke={BLUE} />
    <T x={342} y={236} s={7} w={22}>Submit</T><T x={342} y={248} s={7} w={22}>Cancel</T>
    {["Selecting any", "check box by", "clicking it", "will move", "the member", "to pay and", "calculate the", "total bill and", "pay."].map((t, i) => <T key={t} x={111} y={129 + i * 9} w={[42, 34, 38, 30, 42, 30, 34, 42, 13][i]}>{t}</T>)}
    {["User is able to", "select which", "groups bill to", "view. All will", "be selected by", "default first."].map((t, i) => <T key={t} x={431} y={128 + i * 9} w={[44, 36, 42, 42, 44, 40][i]}>{t}</T>)}
    <T x={235} y={265} w={200}>Payment summary will show amount of expenses to pay</T>
  </Mini>
);
const Mini2 = () => (
  <Mini y={345}>
    <rect x="133.500" y="370.500" width="264" height="171" fill="#f1f1f1" /><path d="M135 372H396V387.500H135" fill="#fff" />
    <MiniNav xs={[142, 187, 235, 280]} y={373} />
    <text x="152" y="405" fontSize="13" fontWeight="700" fill="#111" stroke="none" textLength="40" lengthAdjust="spacingAndGlyphs">Add Bill</text>
    <g fill="#fff"><rect x="163" y="421" width="94" height="9" rx="2" /><rect x="163" y="433" width="94" height="21" rx="2" /><rect x="175" y="461" width="72" height="41" /><rect x="163" y="509" width="94" height="11" rx="2" /><rect x="277" y="418" width="94" height="30" rx="6" /><rect x="277" y="463" width="94" height="51" rx="6" /></g>
    <ellipse cx="328" cy="456" rx="37" ry="7" stroke={BLUE} fill="#fff" /><circle cx="305" cy="456" r="3" fill="#000" />
    <T x={198} y={428} w={22}>Name</T><T x={190} y={444} w={36}>Description</T><T x={196} y={480} w={26}>Amount</T><T x={194} y={516} w={28}>Due date</T><T x={292} y={432} w={58}>Member Select by</T><T x={311} y={459} w={30}>Select all</T>
    <T x={288} y={474} w={10}>All</T><T x={288} y={483} w={10}>Jill</T><T x={288} y={492} w={28}>Member</T><T x={330} y={474} w={20}>Henry</T><T x={330} y={483} w={24}>Roomy</T><T x={330} y={492} w={16}>Tom</T>
    <rect x="334" y="517" width="45" height="15" fill="#70ad47" stroke={BLUE} /><T x={346} y={527} f="#fff" w={20}>Submit</T>
    {["Select to view", "relevant", "members within", "same group."].map((t, i) => <T key={t} x={400} y={438 + i * 9} w={[44, 30, 50, 42][i]}>{t}</T>)}
  </Mini>
);
const Mini3 = () => (
  <Mini y={642}>
    <rect x="169.500" y="658.500" width="261" height="168" fill="#f1f1f1" /><path d="M171 660H429V673.500H171" fill="#fff" />
    <MiniNav xs={[175, 222, 267, 316]} y={661} />
    <text x="186" y="690" fontSize="12.500" fontWeight="700" fill="#111" stroke="none" textLength="81">Manage Groups</text>
    <g fill="#fff"><rect x="187.500" y="700.500" width="108" height="90" /><rect x="301.500" y="700.500" width="111" height="90" /><rect x="205.500" y="796.500" width="72" height="15" /><rect x="319.500" y="796.500" width="75" height="15" /></g>
    <T x={189} y={714} w={33}>My groups:</T><T x={189} y={723} w={38}>Apartment A</T><T x={189} y={731} w={38}>Apartment B</T><T x={303} y={714} w={32}>Invited To:</T><T x={316} y={723} w={38}>Apartment C</T>
    <path d="M188 724.500H228M188 733H228M315 725H351" strokeWidth="2.500" /><rect x="307" y="721" width="7" height="7" stroke="#4faa1e" />
    <T x={211} y={806} w={54}>Create New Group</T><T x={335} y={806} w={40}>Accept Invite</T>
    <ellipse cx="244" cy="804" rx="51" ry="14" stroke={BLUE} /><ellipse cx="360" cy="805" rx="53" ry="15" stroke={BLUE} />
    <T x={206} y={838} w={66}>Figure 4 will pop up to</T><T x={206} y={847} w={76}>allow user to create new</T><T x={206} y={856} w={19}>group.</T><T x={319} y={838} w={80}>Selected group will appear</T><T x={319} y={847} w={60}>under “My groups”.</T>
  </Mini>
);

/* ---------- status bar ---------- */
const Status = styled.div`
  height: 22px;
  flex: none;
  display: flex;
  align-items: center;
  background: #d24726;
  padding-left: 7px;
`;
const ViewBtn = styled.div`
  width: 38px;
  height: 22px;
  margin-left: ${(p) => p.$ml || 0}px;
  flex: none;
  display: flex;
  align-items: center;
  justify-content: center;
  background: ${(p) => (p.$on ? "#b83b1d" : "transparent")};
`;
const White = styled.svg.attrs({ fill: "none", stroke: "#fdeeea", strokeWidth: 1 })`
  margin-left: ${(p) => p.$ml || 0}px;
`;

/* ---------- taskbar ---------- */
const TaskBar = styled.div`
  height: 40px;
  flex: none;
  display: flex;
  border-top: 1px solid #59332c;
  background:
    linear-gradient(rgba(190, 110, 100, 0.5), rgba(220, 190, 185, 0) 6px),
    linear-gradient(90deg, #c4c4c4 0, #b9b9b9 58px, #f6f6f6 66px, #f4f4f4 552px, #fff 640px, #fff 800px, #efefef 850px, #fff 890px, #fff 960px, #f4f4f4 1040px, #fff 1060px, #f8f8f8 1105px, #c9c9c9 1140px, #c2c2c2 1366px);
`;
const Orb = styled.div`
  width: 59px;
  padding: 1px 0 0 8px;
  flex: none;
`;
const TaskBtn = styled.div`
  position: relative;
  width: ${(p) => p.$w}px;
  height: 39px;
  margin-left: ${(p) => p.$ml || 0}px;
  flex: none;
  border: 1px solid #777;
  border-radius: 3px;
  box-shadow: inset 0 0 0 1px #fff;
  background: linear-gradient(115deg, #fff 30%, ${(p) => p.$end || "#fbfbfb"});
  display: flex;
  align-items: center;
  justify-content: center;
`;
const StackEdge = styled.div`
  width: 5px;
  height: 39px;
  flex: none;
  margin-left: -1px;
  border: 1px solid #888;
  border-left: 0;
  border-radius: 0 3px 3px 0;
  background: #f0f0f0;
`;
const Tray = styled.div`
  margin-left: auto;
  display: flex;
  align-items: center;
`;
const TrayLang = styled.div`
  padding-bottom: 5px;
`;
const Clock = styled.div`
  width: 52px;
  margin-left: 16px;
  display: flex;
  flex-direction: column;
  align-items: center;
  gap: 1px;
`;
const Peek = styled.div`
  width: 15px;
  height: 39px;
  margin-left: 9px;
  border: 1px solid #eee;
  background: linear-gradient(90deg, #8f8f8f, #c9c9c9 60%, #b5b5b5);
`;

function Thumbs() {
  const minis = [<Mini1 />, <Mini2 />, <Mini3 />, null, null, null];
  return (
    <ThumbPane>
      {minis.map((m, i) => (
        <ThumbRow key={i}>
          <Num $on={i === 2}>{i + 1}</Num>
          <Thumb $on={i === 2}>{m}</Thumb>
        </ThumbRow>
      ))}
    </ThumbPane>
  );
}

const ScrollUp = () => <ScrollCell $h={15}><Icon x={0} y={0} w={7} h={4}><path d="M0 12L10.500 1L21 12Z" fill="#777" stroke="none" /></Icon></ScrollCell>;
const DownTri = () => <Icon x={0} y={0} w={7} h={4}><path d="M0 0L10.500 11L21 0Z" fill="#777" stroke="none" /></Icon>;

export default function App() {
  return (
    <Window>
      <Global />
      <TitleBar>
        <Icon x={27} y={9} w={18} h={17} mt={3}>
          <path d="M57 18H76V51H57" stroke="#d24726" /><path d="M62 26a8 8 0 1 0 8 8h-8ZM61 45h11" fill="#d24726" stroke="#d24726" strokeWidth="2" /><path d="M30 15L60 9V57L30 52Z" fill="#d24726" stroke="none" /><text x="35" y="44" fontSize="28" fontWeight="700" fontFamily="Open Sans" fill="#fff" stroke="none">P</text>
        </Icon>
        <Icon x={120} y={12} w={14} h={14} ml={13} mt={4}>
          <path d="M120 12H162V54H120Z" fill="#8b5fb0" stroke="none" /><path d="M128 15H154V31H128ZM129 39H153V51H147V43H140V51H129Z" fill="#fff" stroke="none" />
        </Icon>
        <Icon x={204} y={12} w={16} h={14} ml={14} mt={4}>
          <path d="M212 25H233Q246 26 246 37Q245 47 231 48" stroke="#3f7cb8" strokeWidth="6" /><path d="M223 11L209 25L223 39" stroke="#3f7cb8" strokeWidth="6" />
        </Icon>
        <Arrow $ml={5} $mt={9} />
        <Icon x={327} y={12} w={14} h={14} ml={14} mt={4}>
          <path d="M338 18Q328 26 330 37Q334 50 347 49Q362 47 363 33Q362 23 355 18" stroke="#b3b3b3" strokeWidth="5" /><path d="M345 12H361V28Z" fill="#b3b3b3" stroke="#b3b3b3" />
        </Icon>
        <Icon x={411} y={9} w={17} h={17} ml={14} mt={3}>
          <path d="M411 13.500H459M417 15V40.500H431M435 42V54M421 55.500H450" /><circle cx="445" cy="34" r="12" fill="#fff" /><path d="M441 26L453 34L441 42Z" fill="#3e9b74" stroke="none" />
        </Icon>
        <Icon x={498} y={24} w={5} h={6} ml={12} mt={9}><path d="M498 27.500H513" /><path d="M498 33H513L505.500 41Z" fill={G} stroke="none" /></Icon>
        <TitleSlot><Label w={144}>Presentation1 - PowerPoint</Label></TitleSlot>
        <Icon x={423} y={18} w={8} h={11} ml={476} mt={6}><text x="422" y="48" fontSize="39" fontWeight="800" fontFamily="Open Sans" fill="#666" stroke="none">?</text></Icon>
        <Icon x={501} y={18} w={13} h={10} ml={18} mt={6}><path d="M502.500 19.500H538.500V46.500H502.500ZM502 24H538M520 43V29M513 35l7-7 7 7" /></Icon>
        <Icon x={594} y={36} w={9} h={3} ml={18} mt={12}><path d="M594 39H621" strokeWidth="4" /></Icon>
        <Icon x={681} y={18} w={10} h={10} ml={20} mt={6}><path d="M690 27V20H709.500V36H702M682.500 29H702V46H682.500ZM682 32H702M690 22H710" strokeWidth="3.500" /></Icon>
        <Icon x={768} y={19} w={10} h={10} ml={19} mt={6}><path d="M770 20L796 46M796 20L770 46" strokeWidth="6" /></Icon>
      </TitleBar>

      <TabBar>
        <Tab $file $w={59} $pad={20}><Label w={20} color="#fff">FILE</Label></Tab>
        <Tab $active $w={62} $pad={12}><Label w={35} color="#d24726">HOME</Label></Tab>
        <Tab $w={67} $pad={15}><Label w={38}>INSERT</Label></Tab>
        <Tab $w={69} $pad={15}><Label w={40}>DESIGN</Label></Tab>
        <Tab $w={103} $pad={15}><Label w={74}>TRANSITIONS</Label></Tab>
        <Tab $w={102} $pad={15}><Label w={73}>ANIMATIONS</Label></Tab>
        <Tab $w={96} $pad={15}><Label w={67}>SLIDE SHOW</Label></Tab>
        <Tab $w={69} $pad={15}><Label w={40}>REVIEW</Label></Tab>
        <Tab $w={50} $pad={15}><Label w={27}>VIEW</Label></Tab>
        <SignIn>
          <Label w={36}>Sign in</Label>
          <Avatar><Icon x={756} y={75} w={24} h={24}><path d="M765 147V134Q766 122 779 118Q776 108 777 98Q779 84 791 84Q803 84 805 98Q806 108 802 118Q817 122 818 134V147Z" fill="#fff" stroke="none" /><path d="M779 118q12 10 23 0" stroke="#b1b1b1" /></Icon></Avatar>
        </SignIn>
      </TabBar>

      <Ribbon>
        <ClipboardGroup />
        <SlidesGroup />
        <FontGroup />
        <ParagraphGroup />
        <DrawingGroup />
        <EditingGroup />
        <Collapse><Icon x={0} y={0} w={10} h={6}><path d="M3 16L15 4L27 16" strokeWidth="5" /></Icon></Collapse>
      </Ribbon>

      <Work>
        <Thumbs />
        <ScrollBar $h={559}>
          <ScrollUp />
          <ScrollCell $h={326} $mt={-1} />
          <ScrollCell $h={15} $mt={204}><DownTri /></ScrollCell>
        </ScrollBar>
        <Splitter />
        <Editor>
          <VRuler><Ruler n={29} v /></VRuler>
          <Center>
            <HRuler><Ruler n={53} /></HRuler>
            <SlideCanvas />
          </Center>
          <ScrollBar $h={537} $bg="#efefef">
            <ScrollUp />
            <ScrollCell $h={52} $mt={105} />
            <ScrollCell $h={15} $mt={315}><DownTri /></ScrollCell>
            <JumpCell><Icon x={0} y={0} w={7} h={8}><path d="M0 11L10.500 0L21 11ZM0 23L10.500 12L21 23Z" fill="#777" stroke="none" /></Icon></JumpCell>
            <JumpCell><Icon x={0} y={0} w={7} h={8}><path d="M0 0L10.500 11L21 0ZM0 12L10.500 23L21 12Z" fill="#777" stroke="none" /></Icon></JumpCell>
          </ScrollBar>
        </Editor>
      </Work>

      <Status>
        <Label w={63} size={11.5} color="#fff">SLIDE 3 OF 9</Label>
        <Icon x={273} y={29} w={15} h={14} ml={21}><path d="M293 36L275 32V61L293 65V36L303 33M293 65L303 61V58M300 39l14 14M314 39l-14 14M304 60h9" stroke="#fdeeea" /></Icon>
        <Label w={129} ml={16} size={11.5} color="#fff">ENGLISH (UNITED STATES)</Label>
        <White $ml={599} width="11" height="11"><path d="M2.500 4L5.500 .5L8.500 4Z" fill="#fdeeea" /><path d="M0 5.500H11M0 8H11M1 10.500H10" /></White>
        <Label w={34} ml={5} size={11.5} color="#fff">NOTES</Label>
        <White $ml={21} width="12" height="12"><path d="M0 0H12V8H6L2 12V8H0Z" fill="#fdeeea" stroke="none" /></White>
        <Label w={61} ml={4} size={11.5} color="#fff">COMMENTS</Label>
        <ViewBtn $on $ml={19}><White width="14" height="12"><path d="M.75 .75H13.250V11.250H.75ZM4 1V11M4 8.500H13" strokeWidth="1.500" /><path d="M6 2.500H11V6H6Z" fill="#fff" stroke="none" /></White></ViewBtn>
        <ViewBtn><White width="14" height="13"><path d="M0 0h6v5.500H0ZM8 0h6v5.500H8ZM0 7.500h6V13H0ZM8 7.500h6V13H8Z" fill="#fdeeea" stroke="none" /></White></ViewBtn>
        <ViewBtn><White width="14" height="13"><path d="M7 2L.5 1V10.500L7 12L13.500 10.500V1ZM7 2V12M2 3.500l3 .5M2 6l3 .5M2 8.500l3 .5M12 3.500l-3 .5M12 6l-3 .5M12 8.500l-3 .5" /></White></ViewBtn>
        <ViewBtn><White width="14" height="13"><path d="M0 1H14M1.500 1V6.500H12.500V1M7 7V11M4 12H10M4 3.500H10" /></White></ViewBtn>
        <White $ml={4} width="7" height="2"><path d="M0 1H7" strokeWidth="2" /></White>
        <White $ml={4} width="100" height="12"><path d="M0 6.500H100M50.500 4V9" /><path d="M33 0h4v12h-4Z" fill="#fff" stroke="none" /></White>
        <White $ml={3} width="9" height="9"><path d="M.5 4.500H8.500M4.500 .5V8.500" strokeWidth="2" /></White>
        <Label w={22} ml={14} size={11.5} color="#fff">71%</Label>
        <White $ml={14} width="13" height="13"><path d="M.5 .5H12.500V12.500H.5Z" strokeDasharray="5 2 10 2" /><path d="M6.500 2V5M6.500 8V11M2 6.500H5M8 6.500H11M5 3.500l1.500-2 1.500 2M5 9.500l1.500 2 1.500-2M3.500 5l-2 1.500 2 1.500M9.500 5l2 1.500-2 1.500" /></White>
      </Status>

      <TaskBar>
        <Orb>
          <svg width="38" height="37" viewBox="24 87 114 111">
            <defs>
              <radialGradient id="orb" cx=".5" cy=".85" r=".85"><stop offset="0" stopColor="#3fd0f5" /><stop offset=".4" stopColor="#1b6ba5" /><stop offset=".75" stopColor="#173f68" /><stop offset="1" stopColor="#8bb4d0" /></radialGradient>
              <linearGradient id="gloss" x2="0" y2="1"><stop stopColor="#fff" stopOpacity=".65" /><stop offset="1" stopColor="#fff" stopOpacity=".1" /></linearGradient>
            </defs>
            <circle cx="81" cy="143" r="54" fill="url(#orb)" stroke="#24465f" strokeWidth="2" />
            <path d="M31 135A51 51 0 0 1 131 135Q80 150 31 135Z" fill="url(#gloss)" />
            <path d="M56 118Q68 107 83 115L77 141Q63 134 49 142Z" fill="#ee5a24" /><path d="M87 117Q101 122 113 116L108 142Q94 149 81 142Z" fill="#8cc63f" /><path d="M48 146Q62 139 76 145L71 170Q57 163 43 171Z" fill="#3f9fe0" /><path d="M80 147Q94 152 107 147L101 172Q88 180 74 172Z" fill="#fdc82f" />
          </svg>
        </Orb>
        <TaskBtn $w={55} $end="#e4e4e4">
          <svg width="28" height="28" viewBox="-14 -14 28 28"><circle r="14" fill="#f5c80c" /><path d="M0 0L-12.100 -7A14 14 0 0 1 12.100 -7Z" fill="#dc3c2c" /><path d="M-12.100 -7A14 14 0 0 0 0 14L6 3L-6 3Z" fill="#3aa648" /><circle r="6.500" fill="#fff" /><circle r="5" fill="#3b7cc9" /></svg>
        </TaskBtn><StackEdge />
        <TaskBtn $w={60} $ml={3}>
          <svg width="34" height="28" viewBox="403 104 102 84" strokeWidth="2"><path d="M422 107L459 122L440 170L406 154Z" fill="#a6dfa5" stroke="#6dbb72" /><path d="M427 125H468V173H427Z" fill="#a5d2f7" stroke="#72b1e3" /><path d="M441 126L491 117L500 167L456 180Z" fill="#fbe37a" stroke="#deb83b" /></svg>
        </TaskBtn>
        <TaskBtn $w={60} $ml={2}>
          <svg width="34" height="30" viewBox="588 105 102 90"><path d="M592 109H686V168H592Z" fill="#3a8fce" stroke="#22629b" strokeWidth="2" /><path d="M594 111H684V136L594 158Z" fill="#73b7e8" opacity=".5" /><circle cx="617" cy="133" r="13" fill="none" stroke="#d5efff" strokeWidth="3" /><path d="M617 133V119A14 14 0 0 1 628 140Z" fill="#f6a22d" /><path d="M642 123H674V132H642ZM642 141H674V150H642Z" fill="none" stroke="#e8f6ff" strokeWidth="2" /><path d="M644 124h15v7h-15ZM660 142h13v7h-13Z" fill="#54d8f6" /><circle cx="611" cy="157" r="4" fill="#f6a22d" /><circle cx="623" cy="157" r="4" fill="#f6a22d" /><path d="M634 163H648V172H634Z" fill="#666" /><ellipse cx="640" cy="179" rx="20" ry="12" fill="#ddd" stroke="#777" strokeWidth="2" /></svg>
        </TaskBtn>
        <TaskBtn $w={60} $ml={2}>
          <svg width="30" height="30"><circle cx="15" cy="15" r="15" fill="#8db600" /><path d="M5.500 10Q16 6.500 25 11.500M6.500 15.500Q16 12.500 23.500 17M7.500 20.500Q15 18 21.500 22" stroke="#121a05" strokeWidth="2.700" fill="none" strokeLinecap="round" /></svg>
        </TaskBtn>
        <TaskBtn $w={60} $ml={2}>
          <svg width="30" height="28"><defs><linearGradient id="red" x2="0" y2="1"><stop stopColor="#f50e0e" /><stop offset="1" stopColor="#7d0000" /></linearGradient></defs><path d="M1 0H29V27H3L0 24Z" fill="url(#red)" /><path d="M0 2L3 0V27L0 24Z" fill="#610000" /><path d="M14 5Q17 9 13 15T5 21Q8 16 15 15Q23 13 26 17Q22 19 17 13T14 5Z" fill="none" stroke="#fff" strokeWidth="1.500" /></svg>
        </TaskBtn>
        <TaskBtn $w={55} $ml={2}>
          <svg width="31" height="31" viewBox="332 98 93 93"><path d="M386 112H422V176H386M388 154H411M388 161H411M388 168H411" fill="none" stroke="#d24726" strokeWidth="3" /><path d="M397 121a13 13 0 1 0 13 13h-13ZM401 119v11h11a11 11 0 0 0-11-11Z" fill="#d24726" /><path d="M334 107L387 98V189L334 180Z" fill="#d24726" /><text x="344" y="157" fontFamily="Open Sans" fontSize="40" fontWeight="800" fill="#fff">P</text></svg>
        </TaskBtn><StackEdge />
        <TaskBtn $w={61} $ml={3} $end="#eee">
          <svg width="34" height="32" viewBox="522 97 102 96"><path d="M526 148Q531 118 560 113Q600 109 611 139Q613 168 585 181Q565 187 561 174Q554 164 540 172Q525 166 526 148Z" fill="#bcdcf0" stroke="#6a9fc3" strokeWidth="3" /><circle cx="541" cy="148" r="7" fill="#e85550" /><circle cx="556" cy="134" r="7" fill="#5abf48" /><circle cx="576" cy="128" r="8" fill="#f6c132" /><circle cx="566" cy="156" r="7" fill="#fff" stroke="#6a9fc3" strokeWidth="2" /><path d="M570 189L593 126L602 129L578 189Z" fill="#f28c28" /><path d="M590 120Q596 97 620 100Q623 120 603 127Z" fill="#b18457" /></svg>
        </TaskBtn>
        <TaskBtn $w={55} $ml={1}>
          <svg width="31" height="31" viewBox="704 98 93 93"><path d="M757 109H794V179H757M759 118H786M759 126H786M759 134H786M759 142H786M759 150H786M759 158H786M759 167H786" fill="none" stroke="#2b579a" strokeWidth="3" /><path d="M705 107L759 98V189L705 180Z" fill="#2b579a" /><text x="712" y="156" fontFamily="Open Sans" fontSize="34" fontWeight="800" fill="#fff">W</text></svg>
        </TaskBtn><StackEdge />
        <Tray>
          <TrayLang><Label w={14} color="#f4f4f4" size={11.500}>EN</Label></TrayLang>
          <IconSvg $ml={17} width="10" height="6"><path d="M.5 5.500L5 .5L9.500 5.500Z" fill="#fff" stroke="#777" /></IconSvg>
          <IconSvg $ml={13} width="14" height="16" fill="none" stroke="#555"><path d="M.5 5H3L7.500 1V15L3 11H.5Z" fill="#fff" /><path d="M9.500 5Q11 8 9.500 11M11.500 3Q14.500 8 11.500 13" stroke="#eee" /></IconSvg>
          <IconSvg $ml={12} width="10" height="16" fill="none" stroke="#444"><path d="M3.500 2.500V.5H6.500V2.500H9.500V15.500H.5V2.500Z" fill="#fff" /><path d="M2.500 6.500H7.500V13.500H2.500Z" fill="#ddd" /></IconSvg>
          <IconSvg $ml={11} width="17" height="17" fill="#2f95df" stroke="#e6f4ff" strokeWidth=".7"><path d="M4.500 0L8 2.800L4 5.500L0 3ZM12 0L16 3L12 5.500L8 2.800ZM4 5.500L8 8L4.500 11L0 8ZM12 5.500L16 8L12 11L8 8ZM4.500 11.500L8 9L12 11.500L8 15Z" /><circle cx="12.500" cy="12.500" r="4.300" fill="#32a846" stroke="none" /><path d="M10.500 12.500l1.500 2 3-3.500" stroke="#fff" strokeWidth="1.500" fill="none" /></IconSvg>
          <Clock><Label w={44} color="#fff" size={11.800}>9:23 AM</Label><Label w={52} color="#fff" size={11.800}>4/14/2014</Label></Clock>
          <Peek />
        </Tray>
      </TaskBar>
    </Window>
  );
}
